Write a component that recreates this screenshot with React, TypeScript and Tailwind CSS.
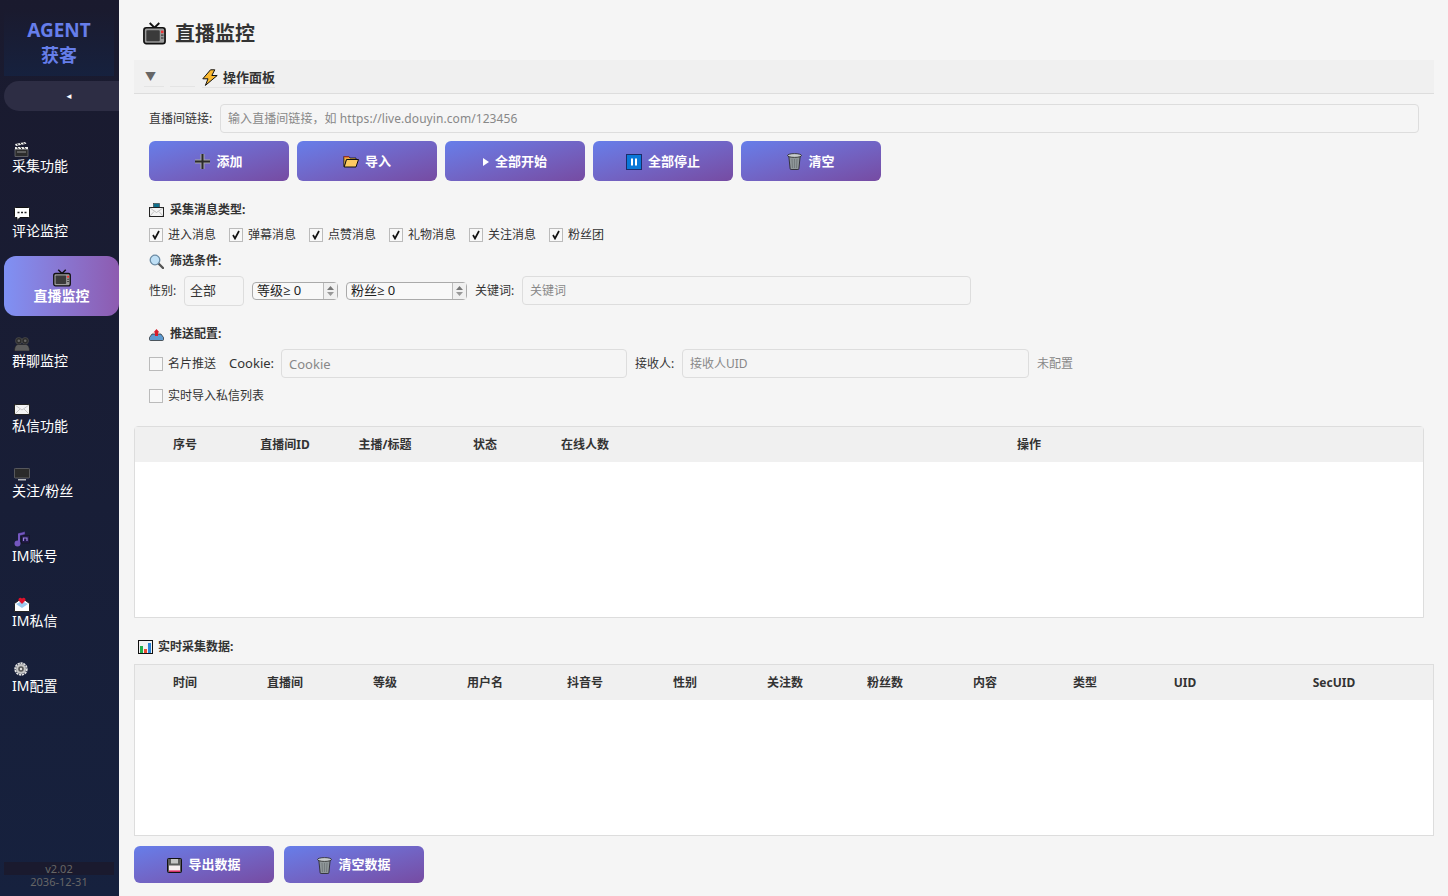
import type { ReactNode } from "react";

const font = { fontFamily: '"Noto Sans", "Noto Sans CJK SC", sans-serif' };

function TvIcon({ size = 16 }: { size?: number }) {
  return (
    <svg width={size} height={size} viewBox="0 0 24 24" className="shrink-0">
      <path d="M7 1l5 5 5-5" fill="none" stroke="#111" strokeWidth="2" />
      <rect x="1" y="6" width="22" height="16.500" rx="2.500" fill="#9a9a9a" stroke="#111" strokeWidth="1.800" />
      <rect x="3.500" y="8.500" width="14" height="11.500" rx="1" fill="#3a3a3a" />
      <rect x="18.800" y="9" width="2.600" height="2.600" fill="#e33" />
      <rect x="18.800" y="13" width="2.600" height="1.400" fill="#444" />
      <rect x="18.800" y="16" width="2.600" height="1.400" fill="#444" />
    </svg>
  );
}

function ClapIcon() {
  return (
    <svg width="15" height="15" viewBox="0 0 15 15">
      <path d="M1 2l10-2 1.500 1.800L2 4z" fill="#f0f0f0" />
      <path d="M3 1.600l1.500 1.800M6 1l1.500 1.800M9 .4l1.500 1.800" stroke="#222" strokeWidth="1" />
      <path d="M1 5h13v2.200H1z" fill="#f0f0f0" />
      <path d="M3 5l1.500 2.200M6.500 5L8 7.200M10 5l1.500 2.200" stroke="#222" strokeWidth="1" />
      <rect x="1" y="7.500" width="13" height="7" fill="#2c2c2c" stroke="#999" strokeWidth=".5" />
      <path d="M3 10h9" stroke="#aaa" strokeWidth=".8" />
    </svg>
  );
}

function ChatIcon() {
  return (
    <svg width="16" height="14" viewBox="0 0 16 14">
      <path d="M1.500 .5h13a1 1 0 011 1v8a1 1 0 01-1 1H6l-3 3v-3H1.500a1 1 0 01-1-1v-8a1 1 0 011-1z" fill="#fff" stroke="#111" />
      <path d="M3.500 5.500h2M7 5.500h2M10.500 5.500h2" stroke="#222" strokeWidth="1.600" />
    </svg>
  );
}

function PeopleIcon() {
  return (
    <svg width="16" height="14" viewBox="0 0 16 14">
      <circle cx="4.800" cy="3.800" r="3.300" fill="#2c2c2c" stroke="#555" strokeWidth=".6" />
      <circle cx="11.200" cy="3.800" r="3.300" fill="#2c2c2c" stroke="#555" strokeWidth=".6" />
      <circle cx="4.800" cy="3.800" r="1.300" fill="#666" />
      <circle cx="11.200" cy="3.800" r="1.300" fill="#666" />
      <path d="M.5 14c0-5 2-6.500 4-6.500h7c2 0 4 1.500 4 6.500z" fill="#5c5c5c" stroke="#222" strokeWidth=".6" />
    </svg>
  );
}

function MailIcon() {
  return (
    <svg width="16" height="11" viewBox="0 0 16 11">
      <rect x=".5" y=".5" width="15" height="10" fill="#f4f4f4" stroke="#222" />
      <path d="M1 1l7 5 7-5M1 10l5-5M15 10l-5-5" fill="none" stroke="#bbb" strokeWidth=".8" />
    </svg>
  );
}

function MonitorIcon() {
  return (
    <svg width="16" height="13" viewBox="0 0 16 13">
      <rect x=".4" y=".4" width="15.200" height="9.600" rx="1" fill="#2a2a2a" stroke="#777" strokeWidth=".7" />
      <path d="M4 11.800h8" stroke="#ddd" strokeWidth="1.200" />
    </svg>
  );
}

function MusicIcon() {
  return (
    <svg width="16" height="16" viewBox="0 0 16 16">
      <rect x="7.500" y="4.500" width="8" height="7.500" fill="#221a4a" stroke="#111" strokeWidth=".5" />
      <path d="M9.500 10V7h3.500v3" fill="none" stroke="#9a80e0" strokeWidth="1.200" />
      <path d="M4.500 2.200L11 .5v3L4.500 5z" fill="#7457c0" stroke="#221a4a" strokeWidth=".5" />
      <path d="M5 2.500v9.500" stroke="#7457c0" strokeWidth="2" />
      <circle cx="3.500" cy="12.500" r="3" fill="#7457c0" />
    </svg>
  );
}

function LoveMailIcon() {
  return (
    <svg width="16" height="15" viewBox="0 0 16 15">
      <path d="M.5 6.500L8 1l7.500 5.500v8H.5z" fill="#fff" stroke="#222" />
      <path d="M2 7l6 4 6-4-6-3z" fill="#9ccaee" />
      <path d="M8 7L4.600 3.600C4 2 5.600.4 7 1l1 .8L9 1c1.400-.6 3 1 2.400 2.600z" fill="#e0102a" />
    </svg>
  );
}

function GearIcon() {
  return (
    <svg width="14" height="14" viewBox="0 0 14 14">
      <circle cx="7" cy="7" r="5.800" fill="none" stroke="#e2e2e2" strokeWidth="1.800" strokeDasharray="2.200 .7" />
      <circle cx="7" cy="7" r="5" fill="#c4c4c4" />
      <circle cx="7" cy="7" r="2.800" fill="#555" />
      <circle cx="7" cy="7" r="1.200" fill="#ddd" />
    </svg>
  );
}

function PackageMailIcon() {
  return (
    <svg width="15" height="14" viewBox="0 0 15 14">
      <rect x="4.500" y=".5" width="6" height="5" fill="#10708c" stroke="#222" strokeWidth=".5" />
      <rect x=".5" y="4.500" width="14" height="9" fill="#f4f4f4" stroke="#222" />
      <path d="M1 5l6.500 4.500L14 5M1 13l4-4.500M14 13l-4-4.500" fill="none" stroke="#aaa" strokeWidth=".7" />
    </svg>
  );
}

function SearchIcon() {
  return (
    <svg width="15" height="15" viewBox="0 0 15 15">
      <path d="M9.500 9.500L14 14" stroke="#555" strokeWidth="2.400" strokeLinecap="round" />
      <circle cx="6" cy="6" r="4.800" fill="#bfe0f6" stroke="#6b8ba4" strokeWidth="1.300" />
    </svg>
  );
}

function OutboxIcon() {
  return (
    <svg width="15" height="13" viewBox="0 0 15 13">
      <path d="M3 6h9l2.500 3.500v2a1 1 0 01-1 1h-12a1 1 0 01-1-1v-2z" fill="#5d9ad0" stroke="#222" strokeWidth=".7" />
      <path d="M7.500 1L4.500 4.500H6V8h3V4.500h1.500z" fill="#d81e2c" />
    </svg>
  );
}

function BoltIcon() {
  return (
    <svg width="16" height="17" viewBox="0 0 16 17">
      <path d="M8.500.8L.8 9.800h5.200L3.400 16.400 15.200 6.500H9.800L12.800.8z" fill="#fbb92e" stroke="#111" strokeWidth="1" strokeLinejoin="round" />
    </svg>
  );
}

function ChartIcon() {
  return (
    <svg width="15" height="14" viewBox="0 0 15 14">
      <rect x=".5" y=".5" width="14" height="13" fill="#f2f2f2" stroke="#111" />
      <rect x="2" y="6" width="3" height="7" fill="#22b14c" />
      <rect x="6" y="9" width="3" height="4" fill="#ed4b32" />
      <rect x="10" y="3" width="3" height="10" fill="#2a83d8" />
    </svg>
  );
}

function PlusIcon() {
  return (
    <svg width="15" height="15" viewBox="0 0 15 15">
      <path d="M5.500 0h4v5.500H15v4H9.500V15h-4V9.500H0v-4h5.500z" fill="#a5a5a5" />
      <path d="M6.500 0h2v15h-2zM0 6.500h15v2H0z" fill="#2a2a2a" />
    </svg>
  );
}

function FolderIcon() {
  return (
    <svg width="16" height="13" viewBox="0 0 16 13">
      <path d="M.8 1.500h5L7 3h6v2H3.500L1.500 11.500H.8z" fill="#e8b040" stroke="#111" strokeWidth=".8" />
      <path d="M.8 1.500h5L6.500 2.500H.8z" fill="#e8412e" />
      <path d="M3.500 4.500H15.500L13 12H1.200z" fill="#fdcb62" stroke="#111" strokeWidth="1" strokeLinejoin="round" />
    </svg>
  );
}

function PauseIcon() {
  return (
    <svg width="16" height="16" viewBox="0 0 16 16">
      <rect x=".5" y=".5" width="15" height="15" fill="#0a78d8" stroke="#1c2c6a" />
      <rect x="5" y="4.500" width="2" height="7" fill="#fff" />
      <rect x="9" y="4.500" width="2" height="7" fill="#fff" />
    </svg>
  );
}

function PlayIcon() {
  return (
    <svg width="6" height="8" viewBox="0 0 6 8">
      <path d="M0 0l6 4-6 4z" fill="#fff" />
    </svg>
  );
}

function TrashIcon() {
  return (
    <svg width="15" height="17" viewBox="0 0 15 17">
      <path d="M1.800 3h11.400l-1.300 12.500a1 1 0 01-1 1H4.100a1 1 0 01-1-1z" fill="#8f9799" stroke="#222" strokeWidth=".8" />
      <ellipse cx="7.500" cy="2.500" rx="7" ry="1.900" fill="#c8cdce" stroke="#222" strokeWidth=".8" />
      <path d="M5 6l.5 9M7.500 6v9M10 6l-.5 9" stroke="#6d7476" strokeWidth=".8" />
    </svg>
  );
}

function SaveIcon() {
  return (
    <svg width="15" height="15" viewBox="0 0 15 15">
      <rect x=".5" y=".5" width="14" height="14" rx="1" fill="#5b5b5b" stroke="#111" />
      <rect x="4" y="1" width="7" height="4.500" fill="#c4c4c4" />
      <rect x="2" y="7.500" width="11" height="6" fill="#f6eef0" />
      <rect x="2" y="12.500" width="11" height="1.200" fill="#e0004c" />
    </svg>
  );
}

const navItems: { label: string; icon: ReactNode }[] = [
  { label: "采集功能", icon: <ClapIcon /> },
  { label: "评论监控", icon: <ChatIcon /> },
  { label: "直播监控", icon: <TvIcon size={18} /> },
  { label: "群聊监控", icon: <PeopleIcon /> },
  { label: "私信功能", icon: <MailIcon /> },
  { label: "关注/粉丝", icon: <MonitorIcon /> },
  { label: "IM账号", icon: <MusicIcon /> },
  { label: "IM私信", icon: <LoveMailIcon /> },
  { label: "IM配置", icon: <GearIcon /> },
];

function Sidebar() {
  return (
    <aside className="flex h-[896px] w-[119px] shrink-0 flex-col bg-gradient-to-b from-[#1a1a2e] to-[#16213e] pl-1">
      <div className="mt-[9px] flex h-[67px] w-[110px] flex-col items-center justify-center bg-gradient-to-b from-[#1a1a2e] to-[#16213e] font-bold text-[#667eea]">
        <span className="text-[19px] leading-6">AGENT</span>
        <span className="text-[18px] leading-[26px]">获客</span>
      </div>
      <div className="mt-[5px] flex h-[30px] items-center justify-center rounded-l-[15px] bg-[#2d2d44] pl-[15px] text-[8px] text-white">
        ◄
      </div>
      <nav className="mt-[15px] flex flex-col gap-[5px]">
        {navItems.map((item) =>
          item.label === "直播监控" ? (
            <div
              key={item.label}
              className="flex h-[60px] flex-col items-center justify-center rounded-xl bg-gradient-to-r from-[#7f91f4] to-[#8d5bb0] pt-[3px] text-[14px] leading-[18px] font-bold text-white"
            >
              <span className="mb-px flex h-[16px] items-center">{item.icon}</span>
              {item.label}
            </div>
          ) : (
            <div key={item.label} className="flex h-[60px] flex-col justify-center pt-[3px] pl-2 text-[14px] leading-[19px] text-white">
              <span className="flex h-[16px] items-center pt-[2px] pl-[2px]">{item.icon}</span>
              {item.label}
            </div>
          ),
        )}
      </nav>
      <div className="mt-auto mb-[21px] h-[13px] w-[110px] bg-[#1a1a2e] text-center text-[11px] leading-[13px] text-[#666]">
        <div>v2.02</div>
        <div>2036-12-31</div>
      </div>
    </aside>
  );
}

function GradientButton({ icon, label, height = "h-10" }: { icon: ReactNode; label: string; height?: string }) {
  const cls =
    "flex w-[140px] items-center justify-center gap-1.5 rounded-md bg-gradient-to-br from-[#667eea] to-[#764ba2] pt-px text-[13px] font-bold text-white " +
    height;
  return (
    <button className={cls}>
      {icon}
      {label}
    </button>
  );
}

function TextBox({ placeholder, className }: { placeholder: string; className: string }) {
  return (
    <input
      placeholder={placeholder}
      className={"rounded border border-[#ddd] bg-[#f5f5f5] px-[7px] outline-none placeholder:text-[#888] " + className}
    />
  );
}

function Check({ label, checked }: { label: string; checked?: boolean }) {
  return (
    <label className="flex items-center gap-[5px] text-[12px] text-[#333]">
      <span className="flex h-[14px] w-[14px] items-center justify-center border border-[#bbb] bg-[#f8f8f8]">
        {checked && (
          <svg width="10" height="10" viewBox="0 0 10 10">
            <path d="M2 5l2 3.500L8 1" fill="none" stroke="#111" strokeWidth="1.700" />
          </svg>
        )}
      </span>
      {label}
    </label>
  );
}

function SectionLabel({ icon, label }: { icon: ReactNode; label: string }) {
  return (
    <div className="flex h-[18px] items-center gap-[6px] text-[12px] font-bold text-[#333]">
      <span className="flex w-[15px] justify-center">{icon}</span>
      {label}
    </div>
  );
}

function Spin({ label, width }: { label: string; width: string }) {
  return (
    <div className={"flex h-[18px] items-center rounded-sm border border-[#aaa] bg-[#f8f8f8] pl-1 text-[13px] text-[#222] " + width}>
      <span className="flex-1 whitespace-nowrap">
        {label}
        <span className="font-['Open_Sans']">≥</span> 0
      </span>
      <span className="flex h-full w-[14px] flex-col items-center justify-center gap-[2px] border-l border-[#bbb] bg-[#f0f0f0]">
        <svg width="7" height="4" viewBox="0 0 7 4"><path d="M3.500 0L7 4H0z" fill="#777" /></svg>
        <svg width="7" height="4" viewBox="0 0 7 4"><path d="M3.500 4L7 0H0z" fill="#999" /></svg>
      </span>
    </div>
  );
}

function TableHead({ cols, lastWide }: { cols: string[]; lastWide?: boolean }) {
  return (
    <div className="flex h-[35px] items-center bg-[#f0f0f0] text-[12px] font-bold text-[#333]">
      {cols.map((c, i) => (
        <div key={c} className={lastWide && i === cols.length - 1 ? "flex-1 text-center" : "w-[100px] shrink-0 text-center"}>
          {c}
        </div>
      ))}
    </div>
  );
}

const actions = [
  { label: "添加", icon: <PlusIcon /> },
  { label: "导入", icon: <FolderIcon /> },
  { label: "全部开始", icon: <PlayIcon /> },
  { label: "全部停止", icon: <PauseIcon /> },
  { label: "清空", icon: <TrashIcon /> },
];

const msgTypes = ["进入消息", "弹幕消息", "点赞消息", "礼物消息", "关注消息", "粉丝团"];

function Main() {
  return (
    <main className="flex h-[896px] flex-1 flex-col bg-[#f5f5f5] pr-[14px] pl-[15px]">
      <header className="flex h-[60px] items-center gap-[9px] pt-[7px] pl-[9px] text-[20px] font-bold text-[#333]">
        <TvIcon size={23} />
        直播监控
      </header>
      <div className="flex h-[34px] items-center border-b border-[#ddd] bg-[#f0f0f0] pt-[3px] text-[13px] font-bold text-[#333]">
        <span className="ml-[10px] flex h-[18px] w-[20px] items-center border-b border-[#e4e4e4] pl-[1px] text-[11px] text-[#666]">▼</span>
        <span className="ml-[6px] h-[18px] w-[25px] border-b border-[#e4e4e4]" />
        <span className="ml-[7px] flex items-center gap-[5px] border-b border-[#e4e4e4]">
          <BoltIcon />
          操作面板
        </span>
      </div>
      <div className="px-[15px]">
        <div className="mt-[10px] flex items-center gap-[7px] text-[12px] text-[#333]">
          <span className="w-[64px] whitespace-nowrap">直播间链接:</span>
          <TextBox placeholder="输入直播间链接，如 https://live.douyin.com/123456" className="h-[29px] flex-1 text-[12px] tracking-[0.07px]" />
        </div>
        <div className="mt-2 flex gap-2">
          {actions.map((a) => (
            <GradientButton key={a.label} icon={a.icon} label={a.label} />
          ))}
        </div>
        <div className="mt-[20px]">
          <SectionLabel icon={<PackageMailIcon />} label="采集消息类型:" />
        </div>
        <div className="mt-[7px] flex h-[18px]">
          {msgTypes.map((m) => (
            <div key={m} className="w-[80px]">
              <Check label={m} checked />
            </div>
          ))}
        </div>
        <div className="mt-[8px]">
          <SectionLabel icon={<SearchIcon />} label="筛选条件:" />
        </div>
        <div className="mt-[6px] flex h-[30px] items-center text-[12px] text-[#333]">
          <span className="w-[35px]">性别:</span>
          <div className="flex h-[30px] w-[60px] items-center rounded border border-[#ddd] pl-[5px] text-[13px]">全部</div>
          <Spin label="等级" width="ml-2 w-[86px]" />
          <Spin label="粉丝" width="ml-2 w-[121px]" />
          <span className="ml-2 w-[47px]">关键词:</span>
          <TextBox placeholder="关键词" className="h-[29px] w-[449px] self-start text-[12px]" />
        </div>
        <div className="mt-[19px]">
          <SectionLabel icon={<OutboxIcon />} label="推送配置:" />
        </div>
        <div className="mt-[6px] flex h-[29px] items-center text-[12px] text-[#333]">
          <Check label="名片推送" />
          <span className="ml-[13px] w-[52px] text-[13px]">Cookie:</span>
          <TextBox placeholder="Cookie" className="h-[29px] w-[346px] text-[13px]" />
          <span className="ml-2 w-[47px]">接收人:</span>
          <TextBox placeholder="接收人UID" className="h-[29px] w-[347px] text-[12px]" />
          <span className="ml-2 text-[#888]">未配置</span>
        </div>
        <div className="mt-[9px] flex h-[18px]">
          <Check label="实时导入私信列表" />
        </div>
      </div>
      <div className="mt-[21px] mr-[10px] flex h-[192px] flex-col rounded-t-sm border border-[#ddd] bg-white">
        <TableHead cols={["序号", "直播间ID", "主播/标题", "状态", "在线人数", "操作"]} lastWide />
      </div>
      <div className="mt-[20px] flex h-[18px] items-center gap-[5px] pl-1 text-[12px] font-bold text-[#333]">
        <ChartIcon />
        实时采集数据:
      </div>
      <div className="mt-[8px] flex h-[172px] flex-col border border-[#ddd] bg-white">
        <TableHead cols={["时间", "直播间", "等级", "用户名", "抖音号", "性别", "关注数", "粉丝数", "内容", "类型", "UID", "SecUID"]} lastWide />
      </div>
      <div className="mt-[10px] flex gap-[10px]">
        <GradientButton icon={<SaveIcon />} label="导出数据" height="h-[37px]" />
        <GradientButton icon={<TrashIcon />} label="清空数据" height="h-[37px]" />
      </div>
    </main>
  );
}

export default function App() {
  return (
    <div className="flex h-[896px] w-[1448px] overflow-hidden" style={font}>
      <Sidebar />
      <Main />
    </div>
  );
}
